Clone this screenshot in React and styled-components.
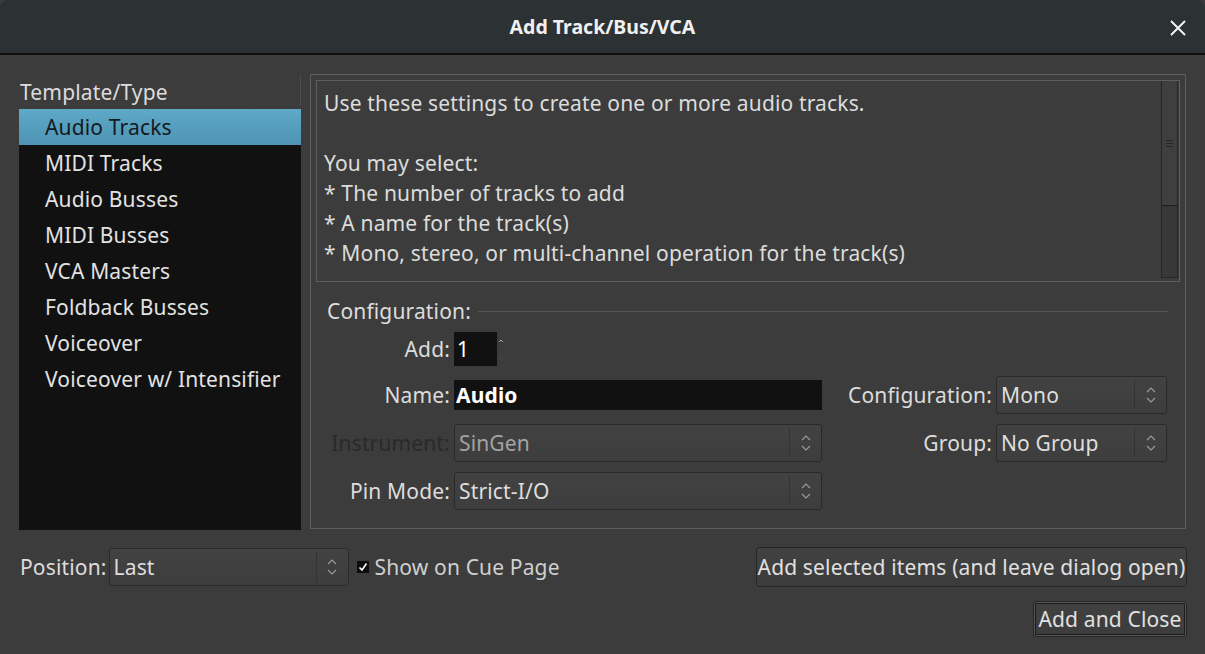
import React from "react";
import styled, { createGlobalStyle } from "styled-components";

const GlobalStyle = createGlobalStyle`
  html, body {
    margin: 0;
    padding: 0;
    background: #3b3b3b;
  }
  body {
    font-family: "Noto Sans", "Open Sans", sans-serif;
    font-size: 21px;
    letter-spacing: 0.15px;
    color: #dedede;
  }
`;

const templates = [
  "Audio Tracks",
  "MIDI Tracks",
  "Audio Busses",
  "MIDI Busses",
  "VCA Masters",
  "Foldback Busses",
  "Voiceover",
  "Voiceover w/ Intensifier",
];

const description = [
  "Use these settings to create one or more audio tracks.",
  "",
  "You may select:",
  "* The number of tracks to add",
  "* A name for the track(s)",
  "* Mono, stereo, or multi-channel operation for the track(s)",
];

const Chevrons = () => (
  <svg width="12" height="20" viewBox="0 0 12 20">
    <path d="M2 7 L6 3 L10 7" fill="none" stroke="#9a9a9a" strokeWidth="1.2" />
    <path d="M2 13 L6 17 L10 13" fill="none" stroke="#9a9a9a" strokeWidth="1.2" />
  </svg>
);

const Combo = ({ value, width, disabled }) => (
  <ComboBox $width={width}>
    <ComboText $disabled={disabled}>{value}</ComboText>
    <ComboArrow>
      <Chevrons />
    </ComboArrow>
  </ComboBox>
);

export default function App() {
  return (
    <>
      <GlobalStyle />
      <Dialog>
        <TitleBar>
          <Title>Add Track/Bus/VCA</Title>
          <CloseButton>
            <svg width="16" height="16" viewBox="0 0 16 16">
              <path d="M1 1 L15 15 M15 1 L1 15" stroke="#f2f2f2" strokeWidth="2" />
            </svg>
          </CloseButton>
        </TitleBar>
        <Body>
          <Main>
            <LeftPanel>
              <ListHeader>Template/Type</ListHeader>
              <List>
                {templates.map((t, i) => (
                  <ListRow key={t} $selected={i === 0}>
                    {t}
                  </ListRow>
                ))}
              </List>
            </LeftPanel>
            <Frame>
              <DescBox>
                <DescText>
                  {description.map((line, i) => (
                    <DescLine key={i}>{line || "\u00a0"}</DescLine>
                  ))}
                </DescText>
                <Scrollbar>
                  <Thumb>
                    <Grip />
                    <Grip />
                    <Grip />
                  </Thumb>
                </Scrollbar>
              </DescBox>
              <ConfigHeader>
                <span>Configuration:</span>
                <Rule />
              </ConfigHeader>
              <ConfigGrid>
                <FieldLabel>Add:</FieldLabel>
                <SpinWrap>
                  <SpinEntry>1</SpinEntry>
                  <SpinArrows>
                    <svg width="6" height="24" viewBox="0 0 6 24">
                      <path d="M1 5 L3 3 L5 5" fill="none" stroke="#bdbdbd" strokeWidth="0.8" />
                      <path d="M1 20 L3 22 L5 20" fill="none" stroke="#4a4a4a" strokeWidth="0.8" />
                    </svg>
                  </SpinArrows>
                </SpinWrap>
                <span />
                <span />

                <FieldLabel>Name:</FieldLabel>
                <NameEntry>Audio</NameEntry>
                <FieldLabel>Configuration:</FieldLabel>
                <Combo value="Mono" />

                <FieldLabel $disabled>Instrument:</FieldLabel>
                <Combo value="SinGen" disabled />
                <FieldLabel>Group:</FieldLabel>
                <Combo value="No Group" />

                <FieldLabel>Pin Mode:</FieldLabel>
                <Combo value="Strict-I/O" />
                <span />
                <span />
              </ConfigGrid>
            </Frame>
          </Main>
          <BottomRow>
            <Group>
              <PlainLabel>Position:</PlainLabel>
              <Combo value="Last" width={240} />
              <CheckBox>
                <svg width="10" height="10" viewBox="0 0 10 10">
                  <path d="M1.5 5.5 L4 8 L8.5 1.5" fill="none" stroke="#ffffff" strokeWidth="1.6" />
                </svg>
              </CheckBox>
              <CheckLabel>Show on Cue Page</CheckLabel>
            </Group>
            <Button $width={431} $height={40}>
              Add selected items (and leave dialog open)
            </Button>
          </BottomRow>
          <ActionRow>
            <Button $width={154} $height={36} $default>
              Add and Close
            </Button>
          </ActionRow>
        </Body>
      </Dialog>
    </>
  );
}

const Dialog = styled.div`
  width: 1205px;
  height: 654px;
  display: flex;
  flex-direction: column;
  background: #3c3c3c;
  border-radius: 8px 8px 0 0;
  overflow: hidden;
`;

const TitleBar = styled.div`
  height: 53px;
  flex-shrink: 0;
  background: #2c3134;
  border-bottom: 2px solid #0f0f0f;
  display: flex;
  align-items: center;
  justify-content: center;
  position: relative;
`;

const Title = styled.div`
  font-weight: 700;
  font-size: 19.5px;
  letter-spacing: 0;
  color: #f0f0f0;
`;

const CloseButton = styled.div`
  position: absolute;
  right: 19px;
  top: 20px;
  width: 16px;
  height: 16px;
  display: flex;
`;

const Body = styled.div`
  flex: 1;
  display: flex;
  flex-direction: column;
  padding: 19px 19px 0 19px;
`;

const Main = styled.div`
  display: flex;
  gap: 9px;
  height: 455px;
`;

const LeftPanel = styled.div`
  width: 282px;
  display: flex;
  flex-direction: column;
`;

const ListHeader = styled.div`
  height: 35px;
  box-sizing: border-box;
  padding: 1px 0 0 1px;
  display: flex;
  align-items: center;
  color: #dcdcdc;
  border-right: 1px solid #4e4e4e;
  border-image: linear-gradient(to bottom, transparent 3px, #4e4e4e 3px, #4e4e4e 30px, transparent 30px) 1;
`;

const List = styled.div`
  flex: 1;
  background: #111111;
  margin-bottom: -1px;
`;

const ListRow = styled.div`
  height: 36px;
  display: flex;
  align-items: center;
  padding-left: 26px;
  color: ${(p) => (p.$selected ? "#141a1e" : "#e2e2e2")};
  background: ${(p) =>
    p.$selected ? "linear-gradient(to bottom, #5ea8c8, #4f94b4)" : "transparent"};
`;

const Frame = styled.div`
  flex: 1;
  border: 1px solid #5e5e5e;
  padding: 5px 5px 0 5px;
  display: flex;
  flex-direction: column;
`;

const DescBox = styled.div`
  height: 202px;
  box-sizing: border-box;
  border: 1px solid #5e5e5e;
  display: flex;
`;

const DescText = styled.div`
  flex: 1;
  padding: 7px 0 0 7px;
  color: #dcdcdc;
`;

const DescLine = styled.div`
  height: 30px;
  line-height: 30px;
  white-space: pre;
`;

const Scrollbar = styled.div`
  width: 15px;
  margin: 0 1px 3px 0;
  background: #383838;
  border: 1px solid #262626;
  border-top: none;
  display: flex;
  flex-direction: column;
`;

const Thumb = styled.div`
  height: 124px;
  background: #3f3f3f;
  border-bottom: 1px solid #1e1e1e;
  display: flex;
  flex-direction: column;
  align-items: center;
  justify-content: center;
  gap: 2px;
`;

const Grip = styled.div`
  width: 7px;
  height: 1px;
  background: #262626;
`;

const ConfigHeader = styled.div`
  display: flex;
  align-items: center;
  gap: 7px;
  margin: 16px 12px 0 11px;
  height: 26px;
  color: #dcdcdc;
`;

const Rule = styled.div`
  flex: 1;
  height: 1px;
  background: #555555;
`;

const ConfigGrid = styled.div`
  display: grid;
  grid-template-columns: 123px 368px 1fr 171px;
  grid-template-rows: 34px 38px 38px 38px;
  column-gap: 4px;
  row-gap: 10px;
  margin: 8px 13px 0 11px;
  align-items: center;
`;

const FieldLabel = styled.div`
  text-align: right;
  white-space: nowrap;
  color: ${(p) => (p.$disabled ? "#2a2a2a" : "#dcdcdc")};
`;

const SpinWrap = styled.div`
  display: flex;
  align-items: center;
  height: 34px;
  gap: 1px;
`;

const SpinEntry = styled.div`
  width: 43px;
  height: 34px;
  background: #111111;
  color: #ffffff;
  display: flex;
  align-items: center;
  padding-left: 3px;
  box-sizing: border-box;
`;

const SpinArrows = styled.div`
  display: flex;
  height: 34px;
  align-items: center;
`;

const NameEntry = styled.div`
  height: 30px;
  background: #111111;
  color: #ffffff;
  font-weight: 700;
  display: flex;
  align-items: center;
  padding-left: 2px;
  box-sizing: border-box;
`;

const ComboBox = styled.div`
  width: ${(p) => (p.$width ? `${p.$width}px` : "auto")};
  height: 38px;
  box-sizing: border-box;
  background: linear-gradient(to bottom, #424242, #3d3d3d);
  border: 1px solid #2a2a2a;
  border-radius: 3px;
  display: flex;
  align-items: stretch;
`;

const ComboText = styled.div`
  flex: 1;
  display: flex;
  align-items: center;
  padding-left: 4px;
  color: ${(p) => (p.$disabled ? "#a3a3a3" : "#dedede")};
  white-space: nowrap;
`;

const ComboArrow = styled.div`
  width: 31px;
  margin: 3px 0;
  border-left: 1px solid #333333;
  display: flex;
  align-items: center;
  justify-content: center;
`;

const BottomRow = styled.div`
  margin-top: 18px;
  height: 40px;
  display: flex;
  align-items: center;
  justify-content: space-between;
`;

const Group = styled.div`
  display: flex;
  align-items: center;
  margin-left: 1px;
`;

const PlainLabel = styled.div`
  color: #dcdcdc;
  margin-right: 2px;
`;

const CheckBox = styled.div`
  width: 12px;
  height: 12px;
  background: #0d0d0d;
  margin: 0 6px 0 8px;
  display: flex;
  align-items: center;
  justify-content: center;
`;

const CheckLabel = styled.div`
  color: #cfcfcf;
`;

const ActionRow = styled.div`
  margin-top: 14px;
  display: flex;
  justify-content: flex-end;
`;

const Button = styled.div`
  width: ${(p) => p.$width}px;
  height: ${(p) => p.$height}px;
  box-sizing: border-box;
  background: linear-gradient(to bottom, #414141, #3c3c3c);
  border: 1px solid #262626;
  border-radius: 3px;
  box-shadow: ${(p) => (p.$default ? "inset 0 0 0 1px #555, inset 0 0 0 2px #1c1c1c" : "none")};
  display: flex;
  align-items: center;
  justify-content: center;
  color: #e0e0e0;
  white-space: nowrap;
  margin-right: -1px;
`;
